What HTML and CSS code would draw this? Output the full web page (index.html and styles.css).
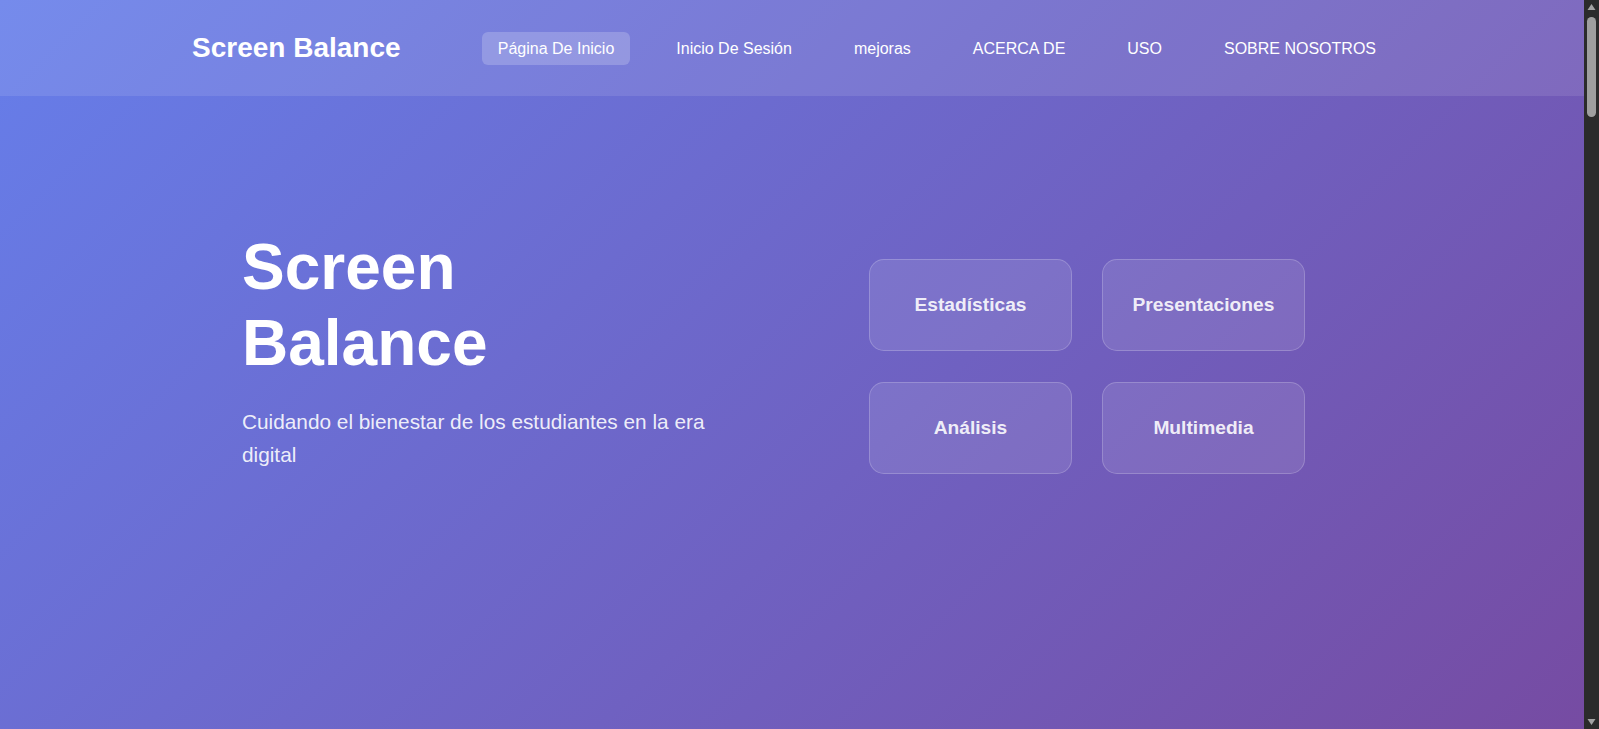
FILE: index.html
```html
<!DOCTYPE html>
<html lang="es">
<head>
<meta charset="utf-8">
<title>Screen Balance</title>
<link rel="stylesheet" href="styles.css">
</head>
<body>
<div class="page">
  <div class="content">
    <header class="site-header">
      <nav class="nav">
        <a class="logo" href="#">Screen Balance</a>
        <ul class="nav-links">
          <li><a class="nav-link active" href="#">Página De Inicio</a></li>
          <li><a class="nav-link" href="#">Inicio De Sesión</a></li>
          <li><a class="nav-link" href="#">mejoras</a></li>
          <li><a class="nav-link" href="#">ACERCA DE</a></li>
          <li><a class="nav-link" href="#">USO</a></li>
          <li><a class="nav-link" href="#">SOBRE NOSOTROS</a></li>
        </ul>
      </nav>
    </header>
    <main>
      <section class="hero">
        <div class="hero-inner">
          <div class="hero-text">
            <h1 class="hero-title">Screen Balance</h1>
            <p class="hero-subtitle">Cuidando el bienestar de los estudiantes en la era digital</p>
          </div>
          <div class="feature-grid">
            <div class="feature-card">Estadísticas</div>
            <div class="feature-card">Presentaciones</div>
            <div class="feature-card">Análisis</div>
            <div class="feature-card">Multimedia</div>
          </div>
        </div>
      </section>
      <section class="more"></section>
    </main>
  </div>
  <aside class="scrollbar" aria-hidden="true">
    <svg class="sb-arrow" width="15" height="15" viewBox="0 0 15 15"><path d="M3.5 10 L7.5 4 L11.5 10 Z" fill="#a3a3a3"/></svg>
    <div class="sb-track"><div class="sb-thumb"></div></div>
    <svg class="sb-arrow" width="15" height="15" viewBox="0 0 15 15"><path d="M3.5 5 L11.5 5 L7.5 11 Z" fill="#a3a3a3"/></svg>
  </aside>
</div>
</body>
</html>
```

FILE: styles.css
```css
* {
  box-sizing: border-box;
}

html, body {
  margin: 0;
  padding: 0;
}

body {
  font-family: "Liberation Sans", Arial, sans-serif;
  color: #ffffff;
  background: linear-gradient(135deg, #667eea 0%, #764ba2 100%) fixed;
  min-height: 100vh;
}

.page {
  display: flex;
  align-items: flex-start;
}

.content {
  flex: 1;
  min-width: 0;
}

.scrollbar {
  position: sticky;
  top: 0;
  width: 15px;
  height: 100vh;
  flex: none;
  background: #2b2b2b;
  display: flex;
  flex-direction: column;
}

.sb-arrow {
  display: block;
  flex: none;
}

.sb-track {
  flex: 1;
  padding: 2px 3px 0 3px;
}

.sb-thumb {
  width: 9px;
  height: 100px;
  background: #9f9f9f;
  border-radius: 5px;
}

.site-header {
  background: rgba(255, 255, 255, 0.1);
}

.nav {
  max-width: 1200px;
  height: 96px;
  margin: 0 auto;
  display: flex;
  align-items: center;
  justify-content: space-between;
}

.logo {
  font-size: 28px;
  font-weight: 700;
  color: #ffffff;
  text-decoration: none;
}

.nav-links {
  list-style: none;
  margin: 0;
  padding: 0;
  display: flex;
  gap: 30px;
}

.nav-link {
  display: block;
  padding: 8px 16px;
  font-size: 16px;
  line-height: 17px;
  color: #ffffff;
  text-decoration: none;
  border-radius: 6px;
}

.nav-link.active {
  background: rgba(255, 255, 255, 0.2);
}

.hero {
  padding: 134px 0 0;
}

.hero-inner {
  max-width: 1100px;
  margin: 0 auto;
  display: grid;
  grid-template-columns: 470px 436px;
  column-gap: 157px;
  align-items: center;
}

.hero-title {
  margin: 0 0 24px;
  font-size: 64px;
  line-height: 1.18;
  font-weight: 700;
}

.hero-subtitle {
  margin: 0 0 32px;
  font-size: 20.8px;
  line-height: 1.6;
  color: rgba(255, 255, 255, 0.9);
}

.feature-grid {
  display: grid;
  grid-template-columns: 1fr 1fr;
  gap: 31px 30px;
}

.feature-card {
  padding: 32px 16px;
  background: rgba(255, 255, 255, 0.1);
  border: 1px solid rgba(255, 255, 255, 0.2);
  border-radius: 15px;
  text-align: center;
  font-size: 19.2px;
  line-height: 26px;
  font-weight: 700;
  color: rgba(255, 255, 255, 0.9);
}

.more {
  min-height: 4550px;
}
```
